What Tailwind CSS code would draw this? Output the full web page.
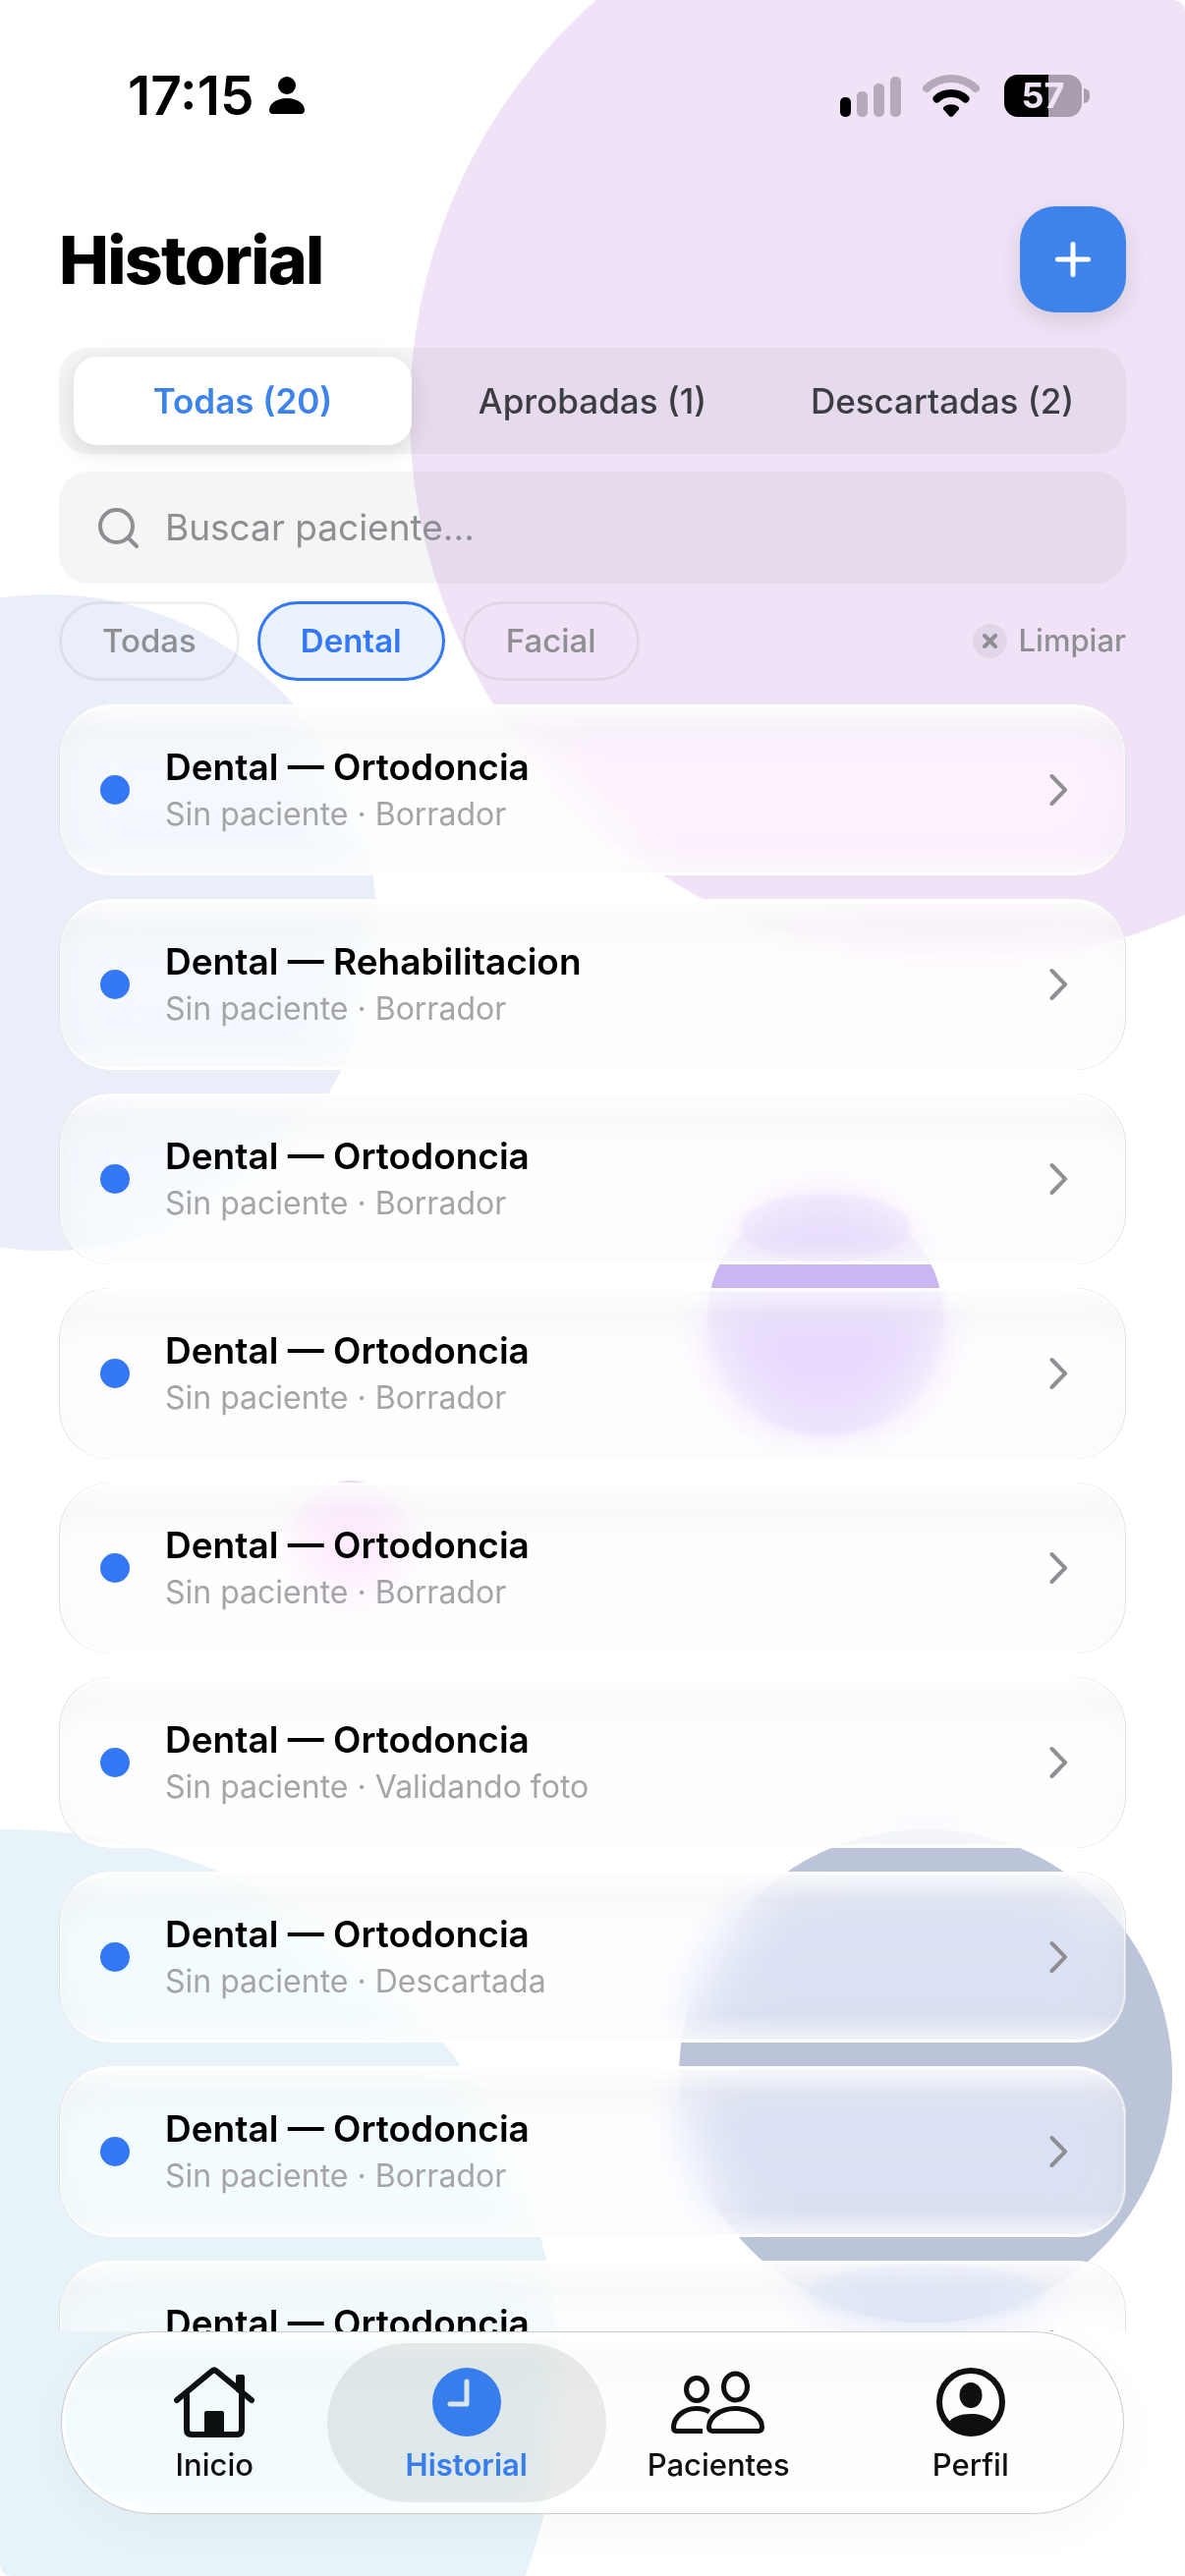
<!DOCTYPE html>
<html lang="es">
<head>
  <meta charset="UTF-8">
  <meta name="viewport" content="width=device-width, initial-scale=1.0">
  <title>Historial</title>
  <script src="https://cdn.jsdelivr.net/npm/@tailwindcss/browser@4"></script>
</head>
<body class="bg-white text-black font-['Inter','Roboto',sans-serif]">
  <div class="relative h-screen flex flex-col overflow-hidden">

    <!-- Fondo decorativo -->
    <div class="absolute inset-0 overflow-hidden rounded-xl" aria-hidden="true">
      <div class="absolute left-[417px] -top-[140px] size-[1120px] rounded-full bg-[#f0e3f7]"></div>
      <div class="absolute -left-[285px] top-[605px] size-[668px] rounded-full bg-[#e9eef8]"></div>
      <div class="absolute -left-[556px] top-[1862px] size-[1126px] rounded-full bg-[#e8f3f9]"></div>
      <div class="absolute left-[691px] top-[1862px] size-[502px] rounded-full bg-[#bcc4da]"></div>
      <div class="absolute left-[720px] top-[1220px] size-[240px] rounded-full bg-[#c9b8f2]"></div>
      <div class="absolute left-[297px] top-[1507px] size-[120px] rounded-full bg-[#f0d4fa]"></div>
    </div>

    <!-- Barra de estado -->
    <div class="relative flex h-[194px] shrink-0 items-center justify-between pl-[130px] pr-[97px]">
      <div class="flex items-center gap-4">
        <span class="text-[55px] leading-none font-semibold">17:15</span>
        <svg class="w-[36px] h-[38px]" viewBox="0 0 36 38" aria-hidden="true">
          <circle cx="18" cy="9" r="9"/>
          <path d="M4 38c-2.600 0-4-1.400-4-4 0-6 7-12 18-12s18 6 18 12c0 2.600-1.400 4-4 4z"/>
        </svg>
      </div>
      <div class="flex items-center">
        <svg class="mr-[22px] w-[62px] h-[43px]" viewBox="0 0 62 43" aria-hidden="true">
          <rect x="0" y="23" width="11" height="20" rx="5"/>
          <g fill="#b6aaba">
            <rect x="17" y="17" width="11" height="26" rx="5"/>
            <rect x="34" y="9" width="11" height="34" rx="5"/>
            <rect x="51" y="2" width="11" height="41" rx="5"/>
          </g>
        </svg>
        <svg class="mr-[25px] w-[58px] h-[43px]" viewBox="0 0 58 43" fill="none" stroke-width="8" stroke-linecap="round" aria-hidden="true">
          <path stroke="#b6aaba" d="M4 14C18 .600 40 .600 54 14"/>
          <path stroke="#000" d="M14.500 24.500c8-7.200 21-7.200 29 0"/>
          <path fill="#000" d="M29 43c-1 0-1.800-.6-2.500-1.400l-5-5.800c-.9-1.300-.7-2.500.4-3.400 4-3 10.200-3 14.200 0 1.100.9 1.300 2.100.4 3.400l-5 5.800c-.7.8-1.500 1.400-2.500 1.400z"/>
        </svg>
        <div class="flex h-[43px] w-[79px] items-center justify-center rounded-[14px] bg-linear-to-r from-black from-57% to-[#a99eae] to-57%">
          <span class="text-[36px] leading-none font-bold text-[#f0e3f7]">57</span>
        </div>
        <div class="ml-[2px] h-[15px] w-[6px] rounded-r-full bg-[#a99eae]"></div>
      </div>
    </div>

    <main class="relative flex min-h-0 flex-1 flex-col px-[60px] pt-4">
      <header class="flex shrink-0 items-center justify-between">
        <h1 class="text-[68px] leading-none font-extrabold tracking-tight">Historial</h1>
        <button type="button" aria-label="Nuevo" class="flex size-[108px] items-center justify-center rounded-[36px] bg-[#3e83ea] shadow-[0_8px_24px_rgba(0,0,0,0.12)]">
          <svg class="size-9" viewBox="0 0 36 36" fill="none" stroke="#fff" stroke-width="5" stroke-linecap="round"><path d="M18 2.500v31M2.500 18h31"/></svg>
        </button>
      </header>

      <!-- Pestañas -->
      <div class="mt-9 grid h-[108px] shrink-0 grid-cols-3 gap-3 rounded-[30px] bg-black/4 px-[15px] py-[9px] text-[35px] font-medium text-[#3c3c43]">
        <button type="button" class="rounded-3xl bg-white font-semibold text-[#3e83ea] shadow-[0_6px_24px_rgba(0,0,0,0.12)]">Todas (20)</button>
        <button type="button">Aprobadas (1)</button>
        <button type="button">Descartadas (2)</button>
      </div>

      <!-- Buscador -->
      <label class="mt-[18px] flex h-[114px] shrink-0 items-center gap-[27px] rounded-[30px] bg-black/4 pl-10">
        <svg class="size-[41px]" viewBox="0 0 41 41" fill="none" stroke="#8e8e93" stroke-width="4" stroke-linecap="round"><circle cx="18.500" cy="18.500" r="16.500"/><path d="M30.500 30.500L39 39"/></svg>
        <input type="text" aria-label="Buscar paciente" placeholder="Buscar paciente..." class="min-w-0 flex-1 bg-transparent text-[37px] outline-none placeholder:text-[#8e8e93]">
      </label>

      <!-- Filtros -->
      <div class="mt-[18px] flex shrink-0 items-center gap-[18px] text-[33px] font-medium text-[#8e8e93]">
        <button type="button" class="h-[81px] rounded-full border-3 border-black/6 px-[41px]">Todas</button>
        <button type="button" class="h-[81px] rounded-full border-3 border-[#3478f6] bg-[#eaf2fd] px-[41px] font-semibold text-[#3478f6]">Dental</button>
        <button type="button" class="h-[81px] rounded-full border-3 border-black/6 px-[41px]">Facial</button>
        <button type="button" class="ml-auto flex items-center gap-3 text-[31px]">
          <span class="flex size-[35px] items-center justify-center rounded-full bg-black/6">
            <svg class="size-[15px]" viewBox="0 0 15 15" fill="none" stroke="#8e8e93" stroke-width="4" stroke-linecap="round"><path d="M2 2l11 11M13 2L2 13"/></svg>
          </span>
          Limpiar
        </button>
      </div>

      <!-- Lista de registros -->
      <ul id="records" class="mt-6 flex min-h-0 flex-1 flex-col gap-6 overflow-y-auto [scrollbar-width:none]"></ul>
    </main>

    <!-- Navegación inferior -->
    <nav class="relative mx-[62px] mb-[63px] flex h-[186px] shrink-0 rounded-full border border-black/20 px-[27px] py-[11px] text-[31px] leading-10 font-medium text-[#0f0f0f] shadow-[0_16px_48px_rgba(0,0,0,0.03),inset_0_4px_3px_#fff,inset_0_-4px_4px_#fff,inset_3px_0_3px_#fff,inset_-3px_0_3px_#fff] backdrop-blur-xl backdrop-brightness-[1.03] backdrop-saturate-150 bg-[linear-gradient(to_bottom,rgba(255,255,255,0.9),rgba(246,247,247,0.5)_18%,rgba(253,253,253,0.4)_40%,rgba(253,253,253,0.4)_85%,rgba(255,255,255,0.9))]">
      <a href="#" class="flex flex-1 flex-col items-center pt-6">
        <svg class="h-[72px] w-[82px]" viewBox="0 0 82 72" fill="none" stroke="#0d1011" stroke-width="6" stroke-linecap="round" stroke-linejoin="round">
          <path d="M3 34L38 5q3-3 6 0l35 29M13 28v36q0 5 5 5h46q5 0 5-5V28"/>
          <path fill="#0d1011" stroke-width="4" d="M65 10h5v18l-5-4z"/>
          <path fill="#0d1011" stroke="none" d="M31 70V47q0-2 2-2h16q2 0 2 2v23z"/>
        </svg>
        <span class="mt-2">Inicio</span>
      </a>
      <a href="#" class="-mx-[14px] flex flex-[1_1_28px] flex-col items-center rounded-full bg-black/8 pt-6 font-semibold text-[#377eec]">
        <svg class="size-[72px]" viewBox="0 0 72 72"><circle cx="36" cy="36" r="35" fill="#377eec"/><path fill="none" stroke="#dbe6ea" stroke-width="5" stroke-linecap="round" stroke-linejoin="round" d="M36 15v23H19"/></svg>
        <span class="mt-2">Historial</span>
      </a>
      <a href="#" class="flex flex-1 flex-col items-center pt-6">
        <svg class="h-[72px] w-[96px]" viewBox="0 0 96 72" fill="none" stroke="#0f0f0f" stroke-width="5" stroke-linejoin="round">
          <ellipse cx="26" cy="23" rx="10.500" ry="11.500"/>
          <ellipse cx="65.500" cy="20.500" rx="12" ry="13.500"/>
          <path d="M39 46c-3.500-2.300-8-3.500-13-3.500C12 42.500 2.500 52 2.500 62q0 3.500 3.500 3.500h26"/>
          <path d="M65.500 42.500C48 42.500 38.500 53 38.500 61.500q0 4 4 4h46q4 0 4-4C92.500 53 83 42.500 65.500 42.500z"/>
        </svg>
        <span class="mt-2">Pacientes</span>
      </a>
      <a href="#" class="flex flex-1 flex-col items-center pt-6">
        <svg class="size-[72px]" viewBox="0 0 72 72"><circle cx="36" cy="36" r="32" fill="none" stroke="#0f0f0f" stroke-width="6"/><ellipse cx="36" cy="29" rx="11.500" ry="13" fill="#0f0f0f"/><path fill="#0f0f0f" d="M13 57c4-6 13-9 23-9s19 3 23 9c-5 8-13 13-23 13s-18-5-23-13z"/></svg>
        <span class="mt-2">Perfil</span>
      </a>
    </nav>
  </div>

  <script>
    const records = [
      { type: 'Ortodoncia', status: 'Borrador' },
      { type: 'Rehabilitacion', status: 'Borrador' },
      { type: 'Ortodoncia', status: 'Borrador', glow: 'left-[693px] top-[102px] w-[174px] h-[68px] rounded-[50%] bg-[#e8dbfb]/40' },
      { type: 'Ortodoncia', status: 'Borrador', glow: 'left-[661px] top-[3px] w-[240px] h-[150px] rounded-b-[120px] bg-[#ebe0fc]/25' },
      { type: 'Ortodoncia', status: 'Borrador' },
      { type: 'Ortodoncia', status: 'Validando foto' },
      { type: 'Ortodoncia', status: 'Descartada' },
      { type: 'Ortodoncia', status: 'Borrador' },
      { type: 'Ortodoncia', status: 'Borrador', glow: 'left-[762px] top-[4px] w-[240px] h-[60px] rounded-[50%] bg-[#dbe5f8]/40' }
    ];

    // Pintar la lista
    document.getElementById('records').innerHTML = records.map(r => `
      <li class="shrink-0">
        <a href="#" class="relative flex h-[174px] items-center overflow-hidden rounded-[52px] pl-[42px] pr-[59px] backdrop-blur-[32px] backdrop-brightness-[1.03] backdrop-saturate-150 bg-[linear-gradient(to_bottom,rgba(255,255,255,0.9)_2%,rgba(246,246,246,0.6)_16%,rgba(253,253,253,0.45)_34%,rgba(253,253,253,0.45)_84%,rgba(255,255,255,0.85))] shadow-[inset_1px_0_0_rgba(0,0,0,0.12),inset_-1px_0_0_rgba(0,0,0,0.12),inset_0_3px_1px_#fff,inset_0_-3px_1px_#fff,inset_2px_0_1px_rgba(255,255,255,0.8),inset_-2px_0_1px_rgba(255,255,255,0.8),inset_0_0_36px_rgba(0,0,0,0.025)]">
          ${r.glow ? `<span class="absolute blur-[2px] ${r.glow}"></span>` : ''}
          <span class="relative size-[30px] rounded-full bg-[#3478f6]"></span>
          <span class="relative ml-9 flex flex-1 flex-col pt-[2px]">
            <span class="text-[37px] leading-[48px] font-semibold">Dental — ${r.type}</span>
            <span class="text-[32px] leading-[48px] text-[#a5a5a9]">Sin paciente · ${r.status}</span>
          </span>
          <svg class="relative h-9 w-[19px]" viewBox="0 0 19 36" fill="none" stroke="#8e8e93" stroke-width="4" stroke-linecap="round" stroke-linejoin="round"><path d="M2.500 4L16 18 2.500 32"/></svg>
        </a>
      </li>
    `).join('');
  </script>
</body>
</html>
